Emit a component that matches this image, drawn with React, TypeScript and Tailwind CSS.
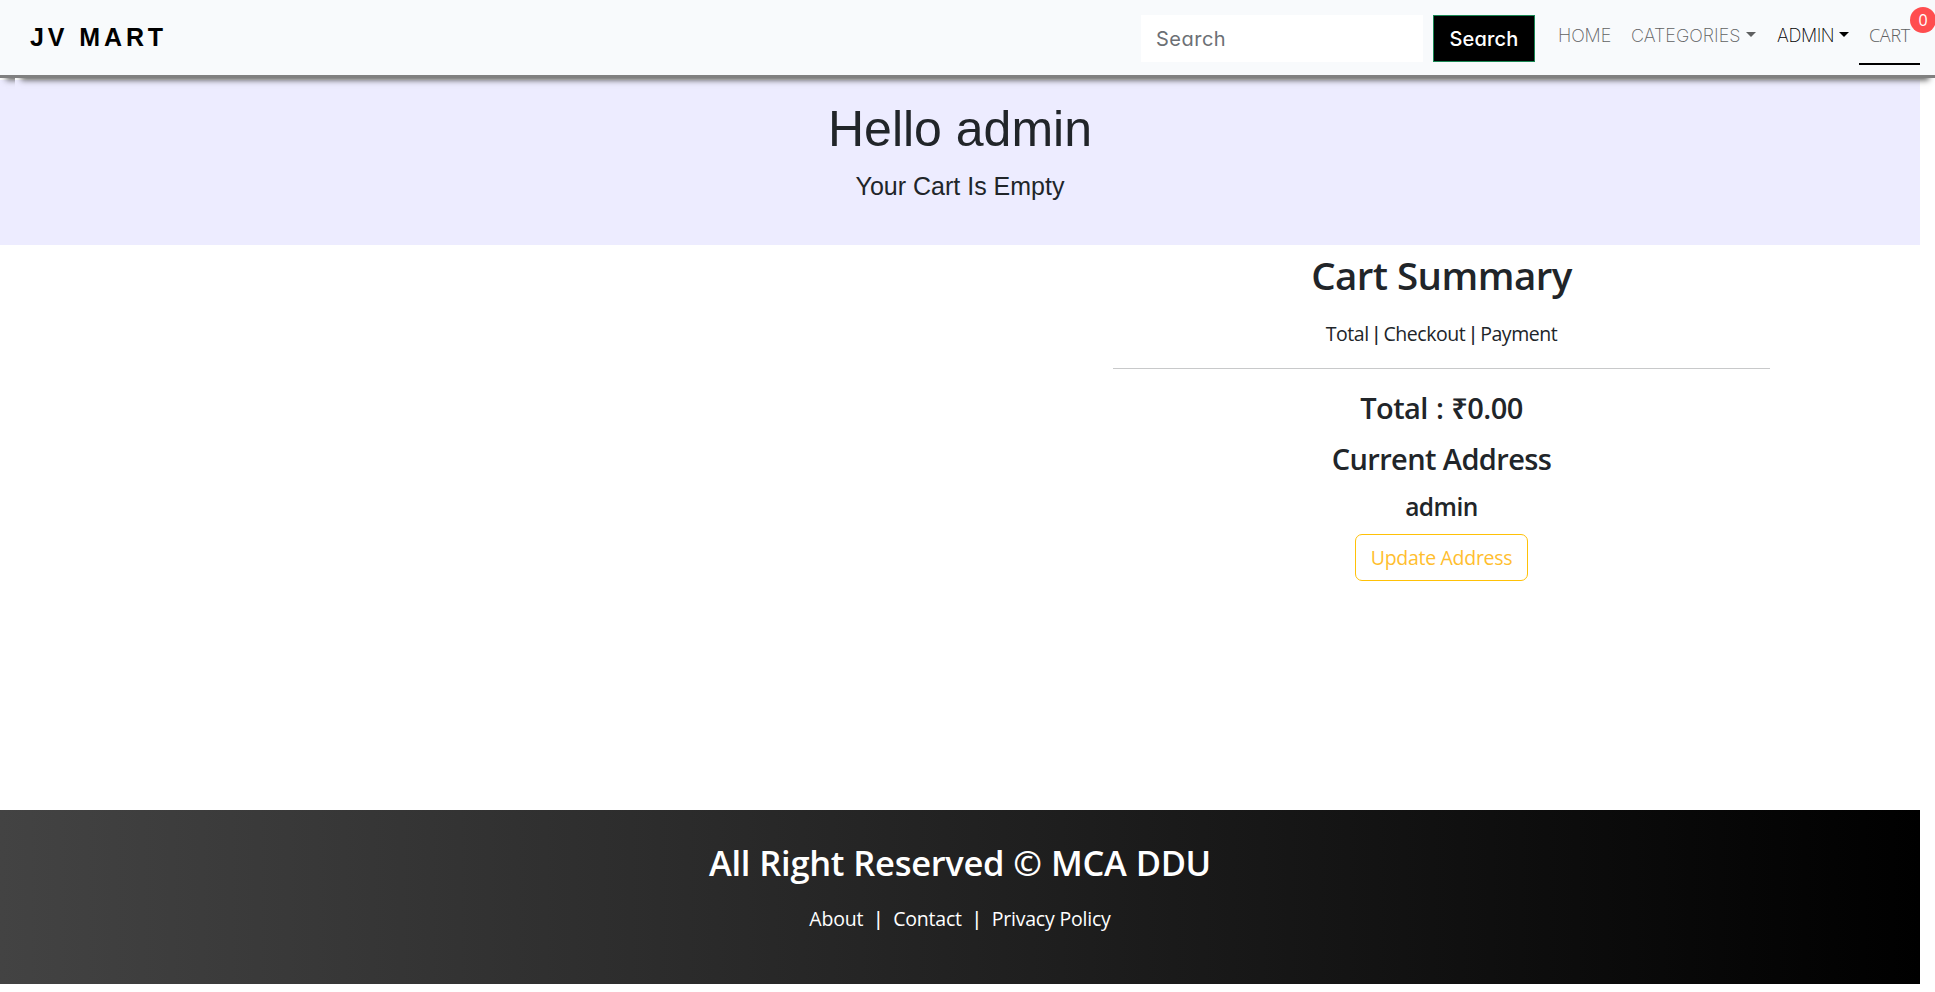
function Caret({ className }: { className: string }) {
  return (
    <svg className={`ml-[5px] mt-[-3px] h-[5px] w-[10px] ${className}`} viewBox="0 0 10 5" fill="currentColor">
      <path d="M0 0h10L5 5z" />
    </svg>
  );
}

function Pipe({ className = '' }: { className?: string }) {
  return <span className={`font-['Liberation_Sans',sans-serif] font-light ${className}`}>|</span>;
}

function NavBar() {
  return (
    <header className="relative z-10 flex h-[78px]">
      <div className="w-[15px] shrink-0 [clip-path:inset(0_0_-20px_0)]">
        <div className="h-full w-[1920px] border-b-[3px] border-[#808080] bg-[#f8fafc] shadow-[0_8px_6px_-6px_#555]" />
      </div>
      <nav className="relative flex flex-1 border-b-[3px] border-[#808080] bg-[#f8fafc] pr-[15px] pl-[15px] shadow-[0_8px_6px_-6px_#555] [clip-path:inset(0_0_-20px_0)]">
        <a className="mt-[19px] font-['Liberation_Sans',Arial,sans-serif] text-[25px] leading-[36px] font-bold tracking-[3.9px] text-black">
          JV MART
        </a>
        <form className="mt-[15px] ml-auto flex h-[47px] gap-[10px] font-['Inter',sans-serif] text-[20px] leading-[48px] tracking-[0.5px] [font-feature-settings:'cv11']">
          <div className="w-[282px] bg-white pl-[15px] text-[#6c7075]">Search</div>
          <button type="button" className="w-[102px] border border-[#198754] bg-black leading-[46px] font-medium tracking-[0.2px] text-white">
            Search
          </button>
        </form>
        <div className="ml-[12px] flex h-[65px] font-['Inter',sans-serif] text-[18px] leading-[71px] font-[250] whitespace-nowrap text-[#606162]">
          <a className="w-[74px] pl-[11px] tracking-[-0.1px]">HOME</a>
          <a className="flex h-[71px] w-[146px] items-center pl-[10px]">
            CATEGORIES
            <Caret className="text-[#5f6061]" />
          </a>
          <a className="flex h-[71px] w-[92px] items-center pl-[10px] tracking-[-0.4px] text-black">
            ADMIN
            <Caret className="text-black" />
          </a>
          <a className="relative w-[61px] border-b-2 border-black pl-[10px] font-['Open_Sans',sans-serif] font-light tracking-[-0.3px]">
            CART
            <span className="absolute top-[7px] left-[51px] flex size-[26px] items-center justify-center rounded-full bg-[#ff4d4f] font-['Open_Sans',sans-serif] text-[16px] leading-none font-normal tracking-normal text-white">
              0
            </span>
          </a>
        </div>
      </nav>
    </header>
  );
}

function Greeting() {
  return (
    <section className="mt-[2px] h-[165px] w-[1920px] bg-[#edecff] text-center font-['Liberation_Sans',Arial,sans-serif] text-[#212529]">
      <h1 className="pt-[19px] text-[50px] leading-[60px]">Hello admin</h1>
      <p className="mt-[12px] text-[25px] leading-[30px]">Your Cart Is Empty</p>
    </section>
  );
}

function CartSummary() {
  return (
    <section className="ml-[1113px] flex w-[657px] flex-col items-center font-semibold">
      <h1 className="mt-[6px] text-[38.5px] leading-[48px] tracking-[-0.55px]">Cart Summary</h1>
      <p className="mt-[20px] text-[19.5px] leading-[30px] font-normal tracking-[-0.45px]">
        Total <Pipe className="mx-[0.5px]" /> Checkout <Pipe className="mx-[0.5px]" /> Payment
      </p>
      <hr className="mt-[19px] w-full border-t border-[#c8c9ca]" />
      <h3 className="mt-[21px] text-[29px] leading-[36px] tracking-[-0.55px] [word-spacing:1px]">Total : ₹0.00</h3>
      <h3 className="mt-[15px] text-[29px] leading-[36px] tracking-[-0.6px]">Current Address</h3>
      <h4 className="mt-[15px] text-[24.5px] leading-[30px] tracking-[-0.5px]">admin</h4>
      <button type="button" className="mt-[12px] h-[47px] w-[173px] rounded-[7px] border border-[#ffc107] text-[19.5px] leading-[45px] font-normal tracking-[-0.3px] text-[#ffbe2e]">
        Update Address
      </button>
    </section>
  );
}

function Footer() {
  return (
    <footer className="mt-auto mb-[8px] flex h-[174px] w-[1920px] flex-col items-center bg-[linear-gradient(to_right,#434343,#000)] text-white">
      <h2 className="mt-[32px] text-[34.5px] leading-[42px] font-semibold tracking-[-0.3px] [word-spacing:0.5px]">All Right Reserved © MCA DDU</h2>
      <p className="mt-[20px] flex text-[19.5px] leading-[30px] tracking-[-0.2px]">
        <a>About</a>
        <Pipe className="mx-[12.5px]" />
        <a>Contact</a>
        <Pipe className="mx-[12.5px]" />
        <a>Privacy Policy</a>
      </p>
    </footer>
  );
}

export default function App() {
  return (
    <div className="flex h-[992px] flex-col overflow-hidden bg-white font-['Open_Sans','Noto_Sans',sans-serif] text-[#212529]">
      <NavBar />
      <Greeting />
      <CartSummary />
      <Footer />
    </div>
  );
}
